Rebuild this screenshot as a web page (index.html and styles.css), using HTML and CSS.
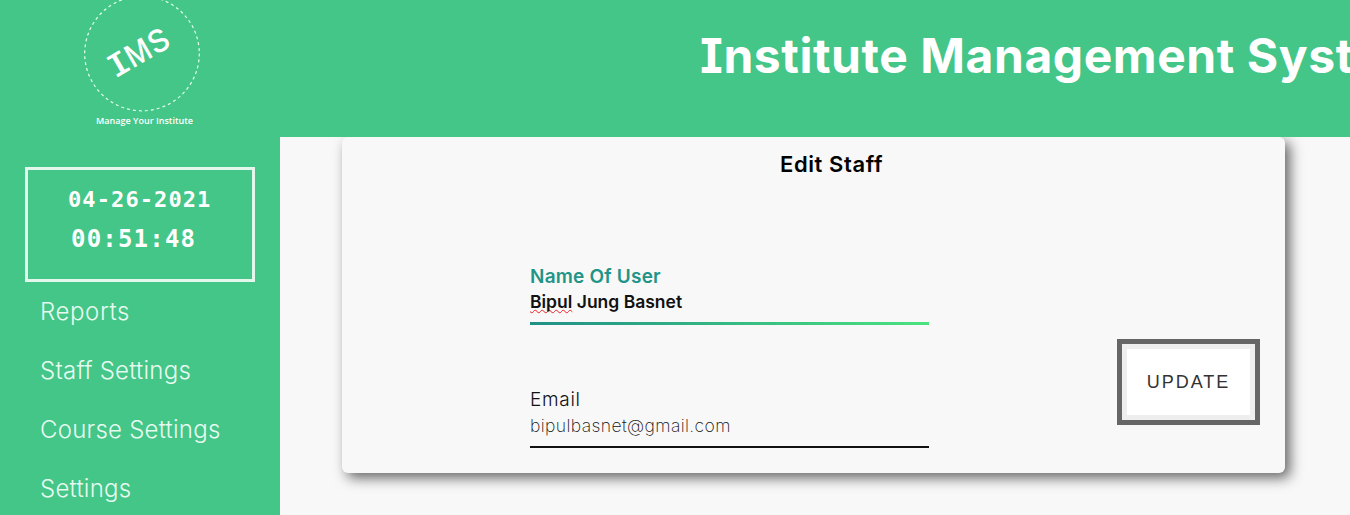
FILE: index.html
```html
<!DOCTYPE html>
<html lang="en">
<head>
<meta charset="utf-8">
<title>Edit Staff</title>
<link rel="stylesheet" href="styles.css">
</head>
<body>
<div class="page">
  <header class="header">
    <svg class="logo" width="160" height="137" viewBox="60 0 160 137">
      <circle class="logo-ring" cx="142" cy="53.5" r="57.3"/>
      <g class="logo-name" transform="translate(118 77) rotate(-30)">
        <text class="logo-i" x="-2" y="0" textLength="18" lengthAdjust="spacingAndGlyphs">I</text>
        <text x="17" y="0" textLength="25" lengthAdjust="spacingAndGlyphs">M</text>
        <text x="43" y="0" textLength="20" lengthAdjust="spacingAndGlyphs">S</text>
      </g>
      <text class="logo-tag" x="96" y="124" textLength="97">Manage Your Institute</text>
    </svg>
    <h1 class="title">Institute Management System</h1>
  </header>
  <div class="body">
    <aside class="sidebar">
      <div class="clock">
        <div class="date">04-26-2021</div>
        <div class="time">00:51:48</div>
      </div>
      <nav class="nav">
        <a class="wide">Reports</a>
        <a>Staff Settings</a>
        <a>Course Settings</a>
        <a>Settings</a>
      </nav>
    </aside>
    <main class="main">
      <section class="card">
        <h2 class="card-title">Edit Staff</h2>
        <div class="fields">
          <div class="field field-active">
            <label class="label">Name Of User</label>
            <div class="value"><span class="misspelled">Bipul</span> Jung Basnet</div>
          </div>
          <div class="field">
            <label class="label">Email</label>
            <div class="value">bipulbasnet@gmail.com</div>
          </div>
        </div>
        <button class="update">UPDATE</button>
      </section>
    </main>
  </div>
</div>
</body>
</html>
```
FILE: styles.css
```css
* { box-sizing: border-box; }
body { margin: 0; background: #f8f8f8; font-family: Inter, "Liberation Sans", sans-serif; }
.page { width: 1350px; height: 515px; overflow: hidden; display: flex; flex-direction: column; }
.header { height: 137px; flex: none; background: #43c688; color: #fff; display: flex; align-items: flex-start; padding-left: 60px; overflow: hidden; position: relative; z-index: 1; }
.logo { flex: none; }
.logo-ring { fill: none; stroke: #e4fff0; stroke-width: 1.2; stroke-dasharray: 3 3; }
.logo-name { fill: #fff; font: 500 31px Inter, sans-serif; }
.logo-i { font-feature-settings: "cv08" 1; }
.logo-tag { fill: #fff; font: 600 9px "Open Sans", sans-serif; }
.title { margin: 26px 0 0 480px; font-size: 48px; line-height: 60px; font-weight: 750; letter-spacing: .55px; white-space: nowrap; font-feature-settings: "cv08" 1; }
.body { flex: 1; min-height: 0; display: flex; }
.sidebar { width: 280px; flex: none; background: #43c688; padding: 30px 25px 0; overflow: hidden; }
.clock { height: 115px; border: 3px solid #e3f7ed; color: #fff; font-family: "DejaVu Sans Mono", monospace; font-weight: 700; padding: 17px 0 0 40px; }
.date { font-size: 22px; line-height: 26px; letter-spacing: 1.1px; }
.time { font-size: 24px; line-height: 30px; letter-spacing: 1.2px; margin: 11px 0 0 3px; }
.nav { display: flex; flex-direction: column; padding-left: 15px; }
.nav a { height: 59px; line-height: 59px; font-size: 24px; font-weight: 300; letter-spacing: .24px; color: #e7faf0; white-space: nowrap; }
.nav .wide { letter-spacing: .6px; }
.main { flex: 1; padding-left: 62px; }
.card { width: 943px; height: 336px; background: #f8f8f8; border-radius: 6px; box-shadow: 5px 5px 13px #666; display: grid; grid-template-columns: 775px 143px; grid-template-rows: 128px 1fr; }
.card-title { grid-column: 1 / -1; margin: 12px 0 0 438px; font-size: 22px; line-height: 30px; font-weight: 600; letter-spacing: .6px; color: #000; }
.fields { padding-left: 188px; }
.field { width: 399px; height: 60px; margin-bottom: 63px; border-bottom: 2px solid #111; color: #111; font-weight: 300; white-space: nowrap; letter-spacing: .4px; }
.label { display: block; font-size: 19px; line-height: 24px; letter-spacing: .7px; }
.value { font-size: 17.5px; line-height: 28px; font-weight: 200; }
.field-active { border-bottom: 3px solid; border-image: linear-gradient(to right, #218f87, #4be37f) 1; font-weight: 600; letter-spacing: 0; }
.field-active .label { color: #1f9588; letter-spacing: .2px; }
.field-active .value { line-height: 26px; font-weight: 600; }
.misspelled { text-decoration: underline wavy #e22 1px; text-underline-offset: 1px; text-decoration-skip-ink: none; }
.update { width: 143px; height: 86px; margin: 74px 0 0; padding: 0; border: 5px solid #666; box-shadow: inset 0 0 0 5px #eee; background: #fff; color: #333; font: 18px "Liberation Sans", sans-serif; letter-spacing: 2px; }
```
